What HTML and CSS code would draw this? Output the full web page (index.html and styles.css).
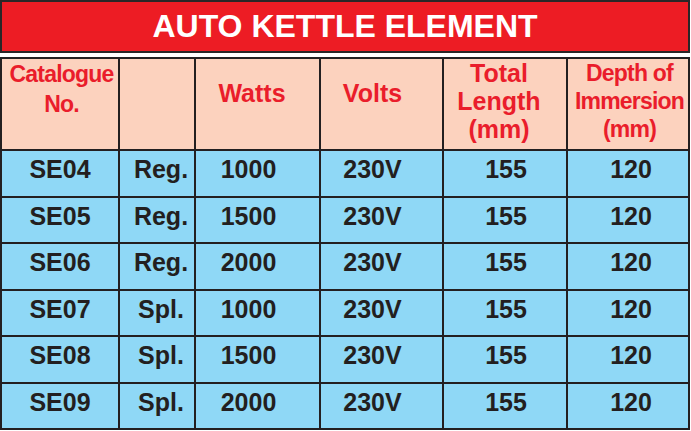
FILE: index.html
```html
<!DOCTYPE html>
<html>
<head>
<meta charset="utf-8">
<link rel="stylesheet" href="styles.css">
</head>
<body>
<div class="sheet">
  <div class="title">AUTO KETTLE ELEMENT</div>
  <div class="grid">
    <div class="hd c1 narrow"><span>Catalogue</span><span>No.</span></div>
    <div class="hd c2"></div>
    <div class="hd c3 single">Watts</div>
    <div class="hd c4 single">Volts</div>
    <div class="hd c5 three"><span>Total</span><span>Length</span><span>(mm)</span></div>
    <div class="hd c6 three narrow"><span>Depth of</span><span>Immersion</span><span>(mm)</span></div>

    <div class="td c1">SE04</div><div class="td c2">Reg.</div><div class="td c3">1000</div><div class="td c4">230V</div><div class="td c5">155</div><div class="td c6">120</div>
    <div class="td c1">SE05</div><div class="td c2">Reg.</div><div class="td c3">1500</div><div class="td c4">230V</div><div class="td c5">155</div><div class="td c6">120</div>
    <div class="td c1">SE06</div><div class="td c2">Reg.</div><div class="td c3">2000</div><div class="td c4">230V</div><div class="td c5">155</div><div class="td c6">120</div>
    <div class="td c1">SE07</div><div class="td c2">Spl.</div><div class="td c3">1000</div><div class="td c4">230V</div><div class="td c5">155</div><div class="td c6">120</div>
    <div class="td c1">SE08</div><div class="td c2">Spl.</div><div class="td c3">1500</div><div class="td c4">230V</div><div class="td c5">155</div><div class="td c6">120</div>
    <div class="td c1">SE09</div><div class="td c2">Spl.</div><div class="td c3">2000</div><div class="td c4">230V</div><div class="td c5">155</div><div class="td c6">120</div>
  </div>
</div>
</body>
</html>
```
FILE: styles.css
```css
html, body {
  margin: 0;
  padding: 0;
  background: #ffffff;
}
body {
  font-family: "Liberation Sans", Arial, sans-serif;
  font-weight: bold;
}
.sheet {
  width: 690px;
  display: flex;
  flex-direction: column;
  gap: 4px;
}
.title {
  height: 49px;
  border: 2px solid #2a2627;
  background: #ed1c24;
  color: #ffffff;
  font-size: 32px;
  line-height: 49px;
  text-align: center;
}
.grid {
  display: grid;
  grid-template-columns: 116px 74px 123px 121px 122px 120px;
  grid-template-rows: 90px 45px 44px 45px 44px 45px 44px;
  gap: 2px;
  padding: 2px;
  background: #231f20;
}
.hd {
  background: #fcd2be;
  color: #ea1d2b;
  font-size: 24.5px;
  line-height: 28px;
  text-align: center;
  display: flex;
  flex-direction: column;
  align-items: center;
}
.hd.narrow {
  font-size: 23px;
  letter-spacing: -0.8px;
}
.hd.c1 {
  line-height: 30px;
  padding-left: 3px;
}
.hd.single {
  font-size: 25px;
  padding-top: 20px;
}
.hd.c3 { padding-right: 11px; }
.hd.c4 { padding-right: 18px; }
.hd.c5 { padding-right: 12px; font-size: 25px; }
.hd.c6 { padding-left: 3px; }
.td {
  background: #8fd8f6;
  color: #231f20;
  font-size: 25px;
  line-height: 28px;
  padding-top: 4px;
  text-align: center;
}
.td.c2 { padding-left: 8px; }
.td.c3 { padding-right: 18px; }
.td.c4 { padding-right: 18px; }
.td.c5 { padding-left: 2px; }
.td.c6 { padding-left: 6px; }
```
